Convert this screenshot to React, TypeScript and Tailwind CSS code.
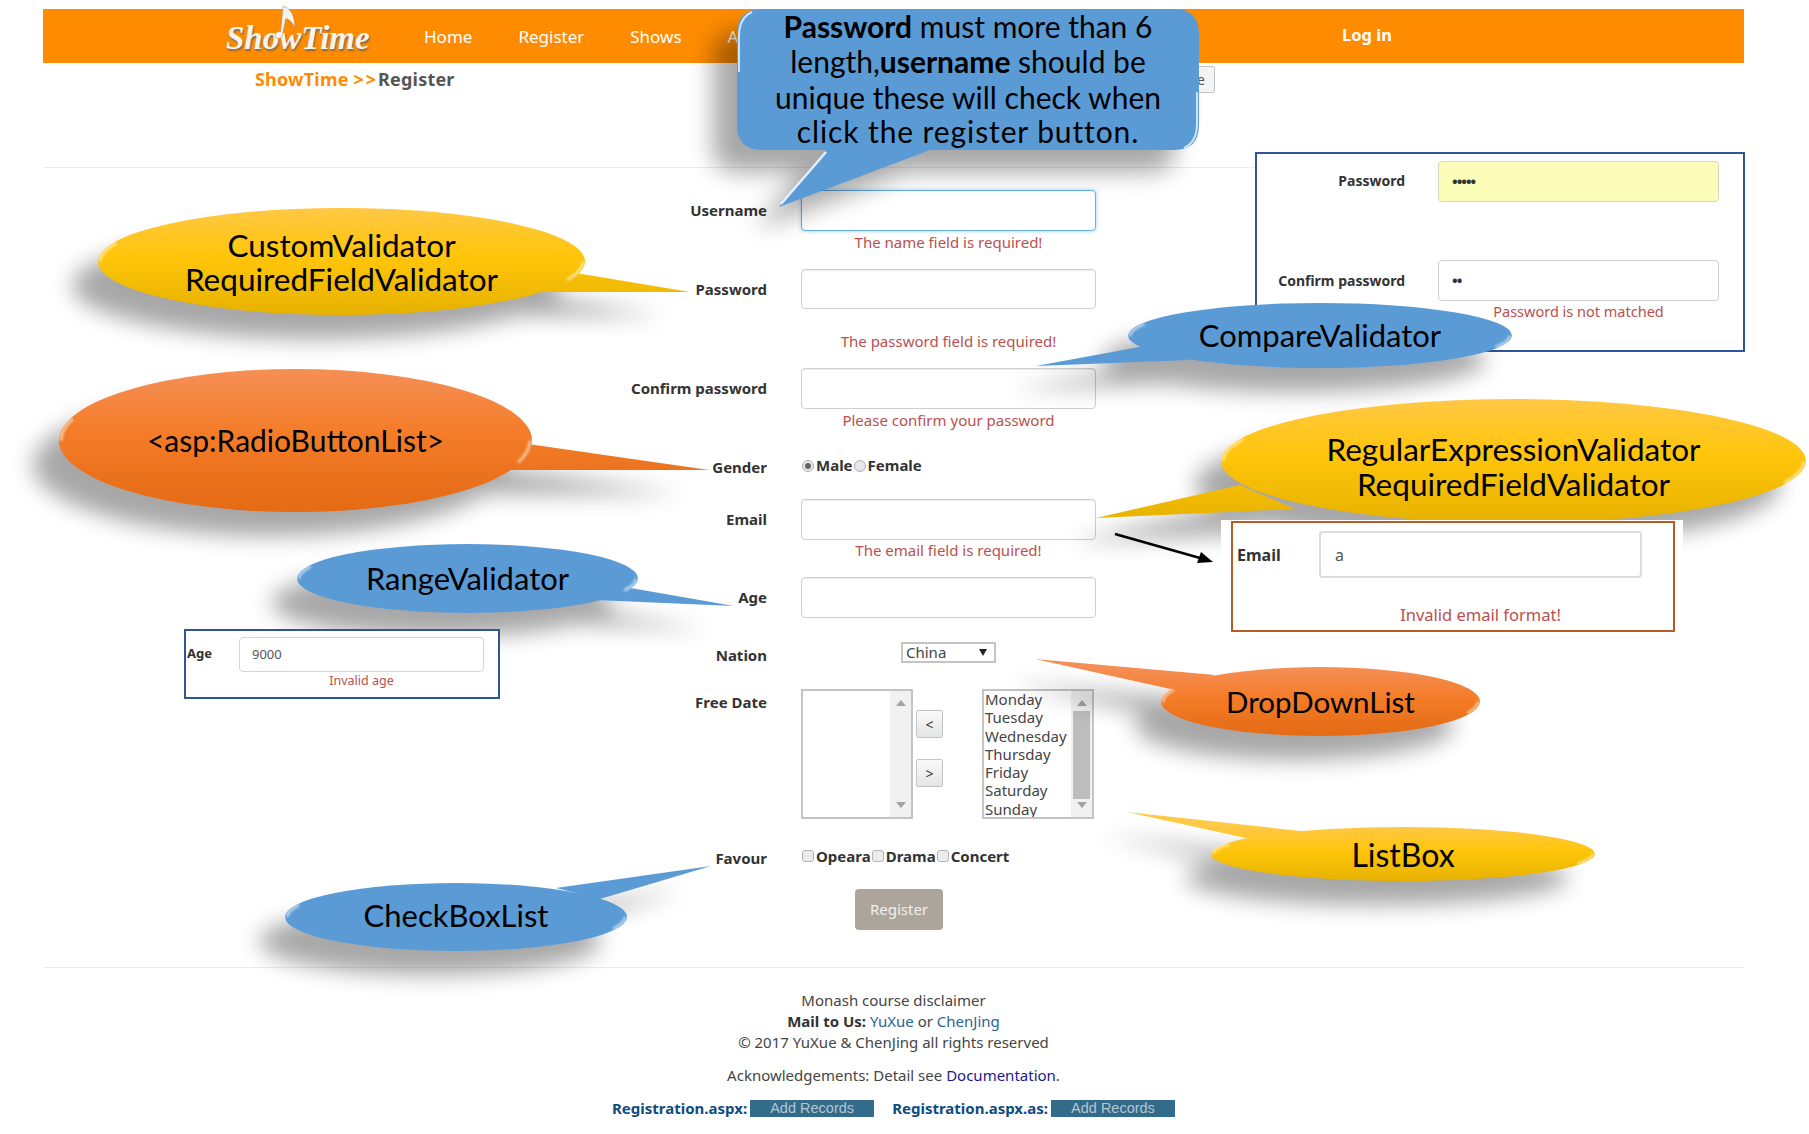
import type { ReactNode } from "react";

const BLUE = "#5b9bd5";
const YELLOW = ["#ffc845", "#ffc50a", "#e6b200"];
const ORANGE = ["#f58f56", "#f47c28", "#e46a14"];
const NO_SHADE = [BLUE, BLUE, BLUE];

type Bubble = {
  id: string;
  cx: number;
  cy: number;
  rx: number;
  ry: number;
  tail: string;
  colors: string[];
  lines: string[];
  lineY: number[];
  size?: number;
};

// the PowerPoint style speech bubbles laid over the screenshot
function Callout({ id, cx, cy, rx, ry, tail, colors, lines, lineY, size = 31 }: Bubble) {
  const shape = (
    <>
      <ellipse cx={cx} cy={cy} rx={rx} ry={ry} />
      <polygon points={tail} />
    </>
  );
  return (
    <svg width={1809} height={1134} className="absolute left-0 top-0 pointer-events-none">
      <defs>
        <linearGradient id={`fill-${id}`} gradientUnits="userSpaceOnUse" x1={0} x2={0} y1={cy - ry} y2={cy + ry}>
          <stop offset="0" stopColor={colors[0]} />
          <stop offset="0.45" stopColor={colors[1]} />
          <stop offset="1" stopColor={colors[2]} />
        </linearGradient>
        <filter id={`blur-${id}`} x="-30%" y="-60%" width="160%" height="220%">
          <feGaussianBlur stdDeviation="11" />
        </filter>
        <filter id={`soft-${id}`}>
          <feGaussianBlur stdDeviation="0.8" />
        </filter>
      </defs>
      <g fill="#000" opacity="0.34" filter={`url(#blur-${id})`} transform="translate(-26 24)">
        {shape}
      </g>
      <g fill={`url(#fill-${id})`}>{shape}</g>
      <ellipse
        cx={cx}
        cy={cy}
        rx={rx - 2}
        ry={ry - 2}
        fill="none"
        stroke="#fff"
        strokeOpacity="0.55"
        strokeWidth="3"
        pathLength={100}
        strokeDasharray="2.5 47.5"
        filter={`url(#soft-${id})`}
      />
      {lines.map((line, i) => (
        <text
          key={line}
          x={cx}
          y={lineY[i]}
          textAnchor="middle"
          dominantBaseline="central"
          fontSize={size}
          className="font-['Lato',sans-serif]"
          fill="#000"
        >
          {line}
        </text>
      ))}
    </svg>
  );
}

function PasswordCallout() {
  const body = "M762 9H1174Q1199 9 1199 34V125Q1199 150 1174 150H930L779 207L826 150H762Q737 150 737 125V34Q737 9 762 9Z";
  return (
    <svg width={1809} height={1134} className="absolute left-0 top-0 pointer-events-none">
      <defs>
        <filter id="blur-pw" x="-30%" y="-30%" width="160%" height="170%">
          <feGaussianBlur stdDeviation="12" />
        </filter>
      </defs>
      <path d={body} fill="#000" opacity="0.34" filter="url(#blur-pw)" transform="translate(-24 22)" />
      <path d={body} fill={BLUE} />
      <path d="M739 72V36Q739 18 752 12" fill="none" stroke="#cfe3f6" strokeWidth="2" />
      <path d="M1197 92V124Q1197 142 1184 148" fill="none" stroke="#cfe3f6" strokeWidth="2" />
      <path d="M826 152L781 204" fill="none" stroke="#e3f0fb" strokeWidth="2.5" />
      <text x={968} textAnchor="middle" fontSize={30} className="font-['Lato',sans-serif]" fill="#000">
        <tspan x={968} y={38}>
          <tspan fontWeight="700">Password</tspan> must more than 6
        </tspan>
        <tspan x={968} y={73}>
          length,<tspan fontWeight="700">username</tspan> should be
        </tspan>
        <tspan x={968} y={109}>unique these will check when</tspan>
        <tspan x={968} y={143} letterSpacing="0.9">click the register button.</tspan>
      </text>
    </svg>
  );
}

const ERROR = "text-center text-[15px] leading-[22px] text-[#b9504e]";
const INPUT = "h-full w-full rounded-[4px] border border-[#cfcfcf] bg-white shadow-[inset_0_1px_1px_rgba(0,0,0,0.08)]";

function Label({ children, className }: { children: ReactNode; className: string }) {
  return (
    <div className={`flex w-[724px] shrink-0 items-center justify-end text-[15px] font-bold text-[#333] ${className}`}>
      {children}
    </div>
  );
}

function Field({
  label,
  error,
  errorClass,
  focus,
  boxClass = "h-[41px]",
}: {
  label: string;
  error: string;
  errorClass?: string;
  focus?: boolean;
  boxClass?: string;
}) {
  return (
    <div className="flex">
      <Label className={boxClass}>{label}</Label>
      <div className="ml-[34px] w-[295px]">
        <div className={boxClass}>
          <div
            className={
              focus
                ? "h-full w-full rounded-[4px] border border-[#66afe9] bg-white shadow-[0_0_4px_rgba(102,175,233,0.6)]"
                : INPUT
            }
          />
        </div>
        {error && <div className={`${ERROR} ${errorClass ?? ""}`}>{error}</div>}
      </div>
    </div>
  );
}

function ScrollBar({ thumb }: { thumb?: boolean }) {
  return (
    <div className="relative h-full w-[21px] shrink-0 bg-[#f1f1f1]">
      <div className="absolute left-[6px] top-[9px] h-0 w-0 border-x-[5px] border-b-[6px] border-x-transparent border-b-[#a3a3a3]" />
      {thumb && <div className="absolute left-[2px] top-[20px] h-[88px] w-[17px] bg-[#bdbdbd]" />}
      <div className="absolute bottom-[9px] left-[6px] h-0 w-0 border-x-[5px] border-t-[6px] border-x-transparent border-t-[#a3a3a3]" />
    </div>
  );
}

function MoveButton({ children, className }: { children: ReactNode; className: string }) {
  return (
    <div
      className={`flex h-[28px] w-[27px] items-center justify-center rounded-[2px] border border-[#c4c4c4] bg-gradient-to-b from-[#fafafa] to-[#e4e4e4] text-[14px] text-[#333] ${className}`}
    >
      {children}
    </div>
  );
}

function Check({ label }: { label: string }) {
  return (
    <>
      <span className="inline-block h-[12px] w-[12px] rounded-[3px] border border-[#b5b5b5] bg-[#ececec]" />
      <span className="ml-[2px] mr-[1px] text-[15px] font-bold text-[#333]">{label}</span>
    </>
  );
}

function Radio({ label, on }: { label: string; on?: boolean }) {
  return (
    <>
      <span className="flex h-[12px] w-[12px] items-center justify-center rounded-full border border-[#b0b0b0] bg-[#e8e8e8]">
        {on && <span className="h-[6px] w-[6px] rounded-full bg-[#666]" />}
      </span>
      <span className="ml-[2px] mr-[1px] text-[15px] font-bold text-[#333]">{label}</span>
    </>
  );
}

function AddRecords() {
  return (
    <div className="flex h-[17px] w-[124px] items-center justify-center bg-[#336b8b] font-['Liberation_Sans',sans-serif] text-[14.5px] font-normal text-[#b4c6d2]">
      Add Records
    </div>
  );
}

function Logo() {
  return (
    <div className="relative ml-[183px] w-[198px] pt-[5px]">
      <span className="font-['Liberation_Serif',serif] text-[33px] font-bold italic text-[#f7f4ec] [text-shadow:1px_2px_2px_#7a6a58]">
        ShowTime
      </span>
      <svg width="26" height="34" viewBox="0 0 26 38" className="absolute left-[46px] top-[-3px]">
        <path
          d="M11 0C18 2 24 9 24 24C21 18 18 15 14 14L10 33C9 37 2 38 2 33C2 29 7 28 8 29Z"
          fill="#f7f4ec"
          stroke="#a08a70"
          strokeWidth="0.6"
        />
      </svg>
    </div>
  );
}

function Page() {
  return (
    <div className="px-[43px] pt-[9px]">
      <header className="flex h-[54px] w-[1701px] items-center bg-[#ff8c00] pr-[352px] text-white">
        <Logo />
        <nav className="flex gap-[46px] pt-[2px] text-[17px]">
          <span>Home</span>
          <span>Register</span>
          <span>Shows</span>
          <span>About</span>
        </nav>
        <span className="ml-auto mb-[2px] text-[16.5px] font-bold">Log in</span>
      </header>

      <div className="flex w-[1172px] items-center justify-between pl-[212px] pt-[3px]">
        <div className="text-[18px] font-bold tracking-[0.2px] text-[#555]">
          <span className="text-[#ff8c00]">
            ShowTime <span className="tracking-[2px]">&gt;&gt;</span>
          </span>
          Register
        </div>
        <div className="flex h-[27px] w-[30px] items-center justify-end rounded-[2px] border border-[#c4c4c4] bg-[#f4f4f4] pr-[9px] text-[14px] text-[#555]">
          e
        </div>
      </div>

      <div className="mt-[74px] h-px w-[1701px] bg-[#ececec]" />

      <form className="pt-[22px]">
        <Field label="Username" error="The name field is required!" focus />
        <div className="mt-[16px]">
          <Field label="Password" error="The password field is required!" errorClass="mt-[21px]" boxClass="h-[40px]" />
        </div>
        <div className="mt-[16px]">
          <Field label="Confirm password" error="Please confirm your password" />
        </div>
        <div className="mt-[25px] flex">
          <Label className="h-[22px]">Gender</Label>
          <div className="ml-[34px] flex h-[20px] items-center pb-[1px] pl-[1px]">
            <Radio label="Male" on />
            <Radio label="Female" />
          </div>
        </div>
        <div className="mt-[21px]">
          <Field label="Email" error="The email field is required!" errorClass="-mt-[1px]" />
        </div>
        <div className="mt-[16px]">
          <Field label="Age" error="" />
        </div>
        <div className="mt-[24px] flex">
          <Label className="h-[21px] pt-[5px]">Nation</Label>
          <div className="ml-[134px] flex h-[21px] w-[95px] items-center justify-between border-2 border-[#c4c4c4] bg-white pl-[3px] pr-[7px] text-[15px] text-[#444]">
            <span>China</span>
            <span className="h-0 w-0 border-x-[4px] border-t-[7px] border-x-transparent border-t-[#222]" />
          </div>
        </div>
        <div className="mt-[26px] flex">
          <Label className="h-[26px]">Free Date</Label>
          <div className="ml-[34px] flex h-[130px] w-[295px]">
            <div className="flex h-full w-[112px] justify-end border-2 border-[#c4c4c4] bg-white">
              <ScrollBar />
            </div>
            <div className="ml-[3px] w-[27px]">
              <MoveButton className="mt-[21px]">&lt;</MoveButton>
              <MoveButton className="mt-[21px]">&gt;</MoveButton>
            </div>
            <div className="ml-[39px] flex h-full w-[112px] justify-between overflow-hidden border-2 border-[#c4c4c4] bg-white pl-[1px]">
              <div className="-mt-[1px] text-[15px] leading-[18.3px] text-[#444]">
                <div>Monday</div>
                <div>Tuesday</div>
                <div>Wednesday</div>
                <div>Thursday</div>
                <div>Friday</div>
                <div>Saturday</div>
                <div>Sunday</div>
              </div>
              <ScrollBar thumb />
            </div>
          </div>
        </div>
        <div className="mt-[28px] flex">
          <Label className="h-[20px] pt-[3px]">Favour</Label>
          <div className="ml-[35px] flex h-[18px] items-center">
            <Check label="Opeara" />
            <Check label="Drama" />
            <Check label="Concert" />
          </div>
        </div>
        <div className="ml-[812px] mt-[22px] flex h-[41px] w-[88px] items-center justify-center rounded-[4px] bg-[#aca59c] text-[15px] text-[#f2efea]">
          Register
        </div>
      </form>

      <div className="mt-[37px] h-px w-[1701px] bg-[#ececec]" />

      <footer className="w-[1701px] pt-[22px] text-center text-[15px] leading-[21px] text-[#444]">
        <div>Monash course disclaimer</div>
        <div>
          <b className="text-[#333]">Mail to Us:</b> <span className="text-[#2a6496]">YuXue</span> or{" "}
          <span className="text-[#2a6496]">ChenJing</span>
        </div>
        <div>© 2017 YuXue &amp; ChenJing all rights reserved</div>
        <div className="mt-[12px]">
          Acknowledgements: Detail see <span className="text-[#1a1a8c]">Documentation</span>.
        </div>
        <div className="mt-[12px] flex items-center justify-center font-bold text-[#0f4c81]">
          <span className="mr-[3px]">Registration.aspx:</span>
          <AddRecords />
          <span className="ml-[18px] mr-[3px]">Registration.aspx.as:</span>
          <AddRecords />
        </div>
      </footer>
    </div>
  );
}

export default function App() {
  return (
    <div className="relative h-[1134px] w-[1809px] overflow-hidden bg-white font-['Noto_Sans',sans-serif] text-[#333]">
      <Page />

      {/* password / confirm password snippet */}
      <div className="absolute left-[1255px] top-[152px] h-[200px] w-[490px] border-2 border-[#2f5597] bg-white">
        <div className="absolute right-[338px] top-[16px] text-[14px] font-bold text-[#333]">Password</div>
        <div className="absolute left-[181px] top-[7px] flex h-[41px] w-[281px] items-center rounded-[4px] border border-[#d5d5c0] bg-[#fbfdb9] pl-[13px] text-[15px] font-bold tracking-[-1px] text-[#333]">
          •••••
        </div>
        <div className="absolute right-[338px] top-[116px] text-[14px] font-bold text-[#333]">Confirm password</div>
        <div className="absolute left-[181px] top-[106px] flex h-[41px] w-[281px] items-center rounded-[4px] border border-[#cfcfcf] bg-white pl-[13px] text-[15px] font-bold tracking-[-1px] text-[#333]">
          ••
        </div>
        <div className="absolute left-[181px] top-[145px] w-[281px] text-center text-[14.5px] leading-6 text-[#b9504e]">
          Password is not matched
        </div>
      </div>

      <Callout
        id="custom"
        cx={341.5}
        cy={261.5}
        rx={243.5}
        ry={53.5}
        tail="570,272 690,292 530,292"
        colors={YELLOW}
        lines={["CustomValidator", "RequiredFieldValidator"]}
        lineY={[245, 279]}
        size={31.5}
      />
      <Callout
        id="compare"
        cx={1320}
        cy={335.5}
        rx={192}
        ry={32.5}
        tail="1150,345 1036,366 1190,360"
        colors={NO_SHADE}
        lines={["CompareValidator"]}
        lineY={[335]}
      />
      <Callout
        id="radio"
        cx={295.5}
        cy={440.5}
        rx={236.5}
        ry={71.5}
        tail="528,444 709,470 505,470"
        colors={ORANGE}
        lines={["<asp:RadioButtonList>"]}
        lineY={[440]}
        size={30}
      />
      <Callout
        id="range"
        cx={467.5}
        cy={578.5}
        rx={170.5}
        ry={34.5}
        tail="625,587 734,606 595,600"
        colors={NO_SHADE}
        lines={["RangeValidator"]}
        lineY={[578]}
      />
      <Callout
        id="regular"
        cx={1513.5}
        cy={461}
        rx={292.5}
        ry={62}
        tail="1240,485 1096,518 1295,509"
        colors={YELLOW}
        lines={["RegularExpressionValidator", "RequiredFieldValidator"]}
        lineY={[449, 484]}
        size={31.5}
      />
      <Callout
        id="dropdown"
        cx={1320.5}
        cy={701.5}
        rx={159.5}
        ry={34.5}
        tail="1215,675 1035,659 1175,690"
        colors={ORANGE}
        lines={["DropDownList"]}
        lineY={[701]}
        size={29.5}
      />
      <Callout
        id="listbox"
        cx={1403}
        cy={854}
        rx={192}
        ry={27}
        tail="1310,832 1127,812 1255,840"
        colors={YELLOW}
        lines={["ListBox"]}
        lineY={[854]}
        size={32}
      />
      <Callout
        id="checkbox"
        cx={456}
        cy={917}
        rx={171}
        ry={34}
        tail="556,888 711,866 600,899"
        colors={NO_SHADE}
        lines={["CheckBoxList"]}
        lineY={[915]}
      />
      <PasswordCallout />

      {/* email snippet, sits on top of the yellow bubble */}
      <div className="absolute left-[1221px] top-[520px] h-[120px] w-[462px] bg-white">
        <div className="absolute left-[10px] top-[1px] h-[111px] w-[444px] border-2 border-[#b85c27]">
          <div className="absolute left-[4px] top-[20px] text-[16px] font-bold text-[#333]">Email</div>
          <div className="absolute left-[86px] top-[8px] flex h-[47px] w-[323px] items-center rounded-[4px] border-2 border-[#dcdcdc] pl-[14px] text-[16px] text-[#555]">
            a
          </div>
          <div className="absolute left-[86px] top-[80px] w-[323px] text-center text-[16.5px] leading-6 text-[#b9504e]">
            Invalid email format!
          </div>
        </div>
      </div>

      {/* arrow pointing at the email snippet */}
      <svg width={1809} height={1134} className="absolute left-0 top-0 pointer-events-none">
        <line x1={1115} y1={534} x2={1200} y2={558} stroke="#000" strokeWidth="2.5" />
        <polygon points="1213,562 1197,563 1201,552" fill="#000" />
      </svg>

      {/* age snippet */}
      <div className="absolute left-[184px] top-[629px] h-[70px] w-[316px] border-2 border-[#2f5597] bg-white">
        <div className="absolute left-[1px] top-[13px] text-[13px] font-bold text-[#333]">Age</div>
        <div className="absolute left-[53px] top-[6px] flex h-[35px] w-[245px] items-center rounded-[4px] border border-[#d5d5d5] pl-[12px] text-[13px] text-[#555]">
          9000
        </div>
        <div className="absolute left-[53px] top-[40px] w-[245px] text-center text-[12.5px] leading-5 text-[#b9504e]">
          Invalid age
        </div>
      </div>
    </div>
  );
}
